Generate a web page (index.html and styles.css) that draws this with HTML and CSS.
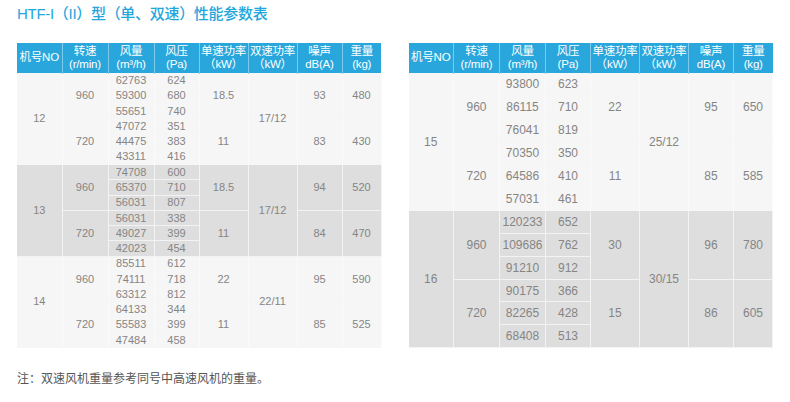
FILE: index.html
```html
<!DOCTYPE html>
<html lang="zh">
<head>
<meta charset="utf-8">
<link rel="stylesheet" href="styles.css">
</head>
<body>
<div class="page">
  <h1 class="title">HTF-I（II）型（单、双速）性能参数表</h1>
  <div class="tables">
    <table class="spec spec-left">
      <colgroup><col class="c1"><col class="c2"><col class="c3"><col class="c4"><col class="c5"><col class="c6"><col class="c7"><col class="c8"></colgroup>
      <thead>
        <tr><th>机号NO</th><th>转速<br>(r/min)</th><th>风量<br>(m³/h)</th><th>风压<br>(Pa)</th><th>单速功率<br>（kW）</th><th>双速功率<br>（kW）</th><th>噪声<br>dB(A)</th><th>重量<br>(kg)</th></tr>
      </thead>
      <tbody class="light">
        <tr><td rowspan="6">12</td><td rowspan="3">960</td><td>62763</td><td>624</td><td rowspan="3">18.5</td><td rowspan="6">17/12</td><td rowspan="3">93</td><td rowspan="3">480</td></tr>
        <tr><td>59300</td><td>680</td></tr>
        <tr><td>55651</td><td>740</td></tr>
        <tr><td rowspan="3">720</td><td>47072</td><td>351</td><td rowspan="3">11</td><td rowspan="3">83</td><td rowspan="3">430</td></tr>
        <tr><td>44475</td><td>383</td></tr>
        <tr><td>43311</td><td>416</td></tr>
      </tbody>
      <tbody class="dark">
        <tr><td rowspan="6">13</td><td rowspan="3">960</td><td>74708</td><td>600</td><td rowspan="3">18.5</td><td rowspan="6">17/12</td><td rowspan="3">94</td><td rowspan="3">520</td></tr>
        <tr><td>65370</td><td>710</td></tr>
        <tr><td>56031</td><td>807</td></tr>
        <tr><td rowspan="3">720</td><td>56031</td><td>338</td><td rowspan="3">11</td><td rowspan="3">84</td><td rowspan="3">470</td></tr>
        <tr><td>49027</td><td>399</td></tr>
        <tr><td>42023</td><td>454</td></tr>
      </tbody>
      <tbody class="light">
        <tr><td rowspan="6">14</td><td rowspan="3">960</td><td>85511</td><td>612</td><td rowspan="3">22</td><td rowspan="6">22/11</td><td rowspan="3">95</td><td rowspan="3">590</td></tr>
        <tr><td>74111</td><td>718</td></tr>
        <tr><td>63312</td><td>812</td></tr>
        <tr><td rowspan="3">720</td><td>64133</td><td>344</td><td rowspan="3">11</td><td rowspan="3">85</td><td rowspan="3">525</td></tr>
        <tr><td>55583</td><td>399</td></tr>
        <tr><td>47484</td><td>458</td></tr>
      </tbody>
    </table>
    <table class="spec spec-right">
      <colgroup><col class="c1"><col class="c2"><col class="c3"><col class="c4"><col class="c5"><col class="c6"><col class="c7"><col class="c8"></colgroup>
      <thead>
        <tr><th>机号NO</th><th>转速<br>(r/min)</th><th>风量<br>(m³/h)</th><th>风压<br>(Pa)</th><th>单速功率<br>（kW）</th><th>双速功率<br>（kW）</th><th>噪声<br>dB(A)</th><th>重量<br>(kg)</th></tr>
      </thead>
      <tbody class="light">
        <tr><td rowspan="6">15</td><td rowspan="3">960</td><td>93800</td><td>623</td><td rowspan="3">22</td><td rowspan="6">25/12</td><td rowspan="3">95</td><td rowspan="3">650</td></tr>
        <tr><td>86115</td><td>710</td></tr>
        <tr><td>76041</td><td>819</td></tr>
        <tr><td rowspan="3">720</td><td>70350</td><td>350</td><td rowspan="3">11</td><td rowspan="3">85</td><td rowspan="3">585</td></tr>
        <tr><td>64586</td><td>410</td></tr>
        <tr><td>57031</td><td>461</td></tr>
      </tbody>
      <tbody class="dark">
        <tr><td rowspan="6">16</td><td rowspan="3">960</td><td>120233</td><td>652</td><td rowspan="3">30</td><td rowspan="6">30/15</td><td rowspan="3">96</td><td rowspan="3">780</td></tr>
        <tr><td>109686</td><td>762</td></tr>
        <tr><td>91210</td><td>912</td></tr>
        <tr><td rowspan="3">720</td><td>90175</td><td>366</td><td rowspan="3">15</td><td rowspan="3">86</td><td rowspan="3">605</td></tr>
        <tr><td>82265</td><td>428</td></tr>
        <tr><td>68408</td><td>513</td></tr>
      </tbody>
    </table>
  </div>
  <p class="note">注：双速风机重量参考同号中高速风机的重量。</p>
</div>
</body>
</html>
```

FILE: styles.css
```css
* { box-sizing: border-box; }
html, body { margin: 0; padding: 0; background: #fff; }
body {
  width: 790px;
  height: 402px;
  overflow: hidden;
  font-family: "Liberation Sans", "Noto Sans CJK SC", sans-serif;
}
.page { padding: 5px 0 0 17px; }
.title {
  margin: 0;
  height: 38px;
  font-size: 15px;
  line-height: 18px;
  font-weight: 500;
  color: #23a6dc;
  letter-spacing: -0.3px;
}
.tables { display: flex; gap: 27px; }
.spec {
  border-collapse: collapse;
  table-layout: fixed;
  width: 364px;
  color: #858585;
  text-align: center;
}
.c1 { width: 45px; }
.c2 { width: 46px; }
.c3 { width: 46px; }
.c4 { width: 45px; }
.c5 { width: 49px; }
.c6 { width: 49px; }
.c7 { width: 45px; }
.c8 { width: 39px; }
.spec th {
  background: #29a7dc;
  color: #fff;
  font-weight: normal;
  font-size: 11.5px;
  line-height: 13px;
  height: 30px;
  padding: 0;
  border-left: 1px solid #7ccbec;
  white-space: nowrap;
  letter-spacing: -0.2px;
}
.spec th:first-child { border-left: none; }
.spec td {
  padding: 0;
  border: 1px solid #fff;
  line-height: 1;
}
.spec td:first-child { border-left: none; }
.light td { background: #f6f6f6; border-color: #f6f6f6 #fbfbfb; }
.dark td { background: #dedede; border-color: #f3f3f3; }
.spec-left td { font-size: 11px; }
.spec-left tbody tr { height: 15.28px; }
.spec-right td { font-size: 12px; }
.spec-right tbody tr { height: 22.8px; }
.note {
  margin: 21px 0 0;
  font-size: 12px;
  color: #555;
  font-family: "Noto Sans CJK SC", sans-serif;
}
```
